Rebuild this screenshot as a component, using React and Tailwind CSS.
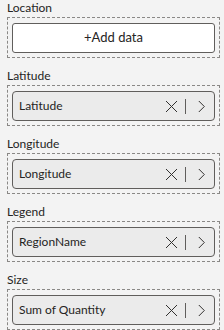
import { useState } from "react"

const wells = [
  { label: "Latitude", field: "Latitude" },
  { label: "Longitude", field: "Longitude" },
  { label: "Legend", field: "RegionName" },
  { label: "Size", field: "Sum of Quantity" },
]

const FieldPill = ({ name }) => (
  <div className="flex h-[30px] items-center rounded-[4px] border border-[#605e5c] bg-[#ebebeb] pl-[6px] pr-[9px]">
    <span className="flex-1 truncate text-[12px] text-[#252423]">{name}</span>
    <svg width="13" height="13" viewBox="0 0 13 13" className="text-[#323130]">
      <path d="M1 1 L12 12 M12 1 L1 12" stroke="currentColor" strokeWidth="1" fill="none" />
    </svg>
    <div className="ml-[7px] mr-[12px] h-[15px] w-px bg-[#605e5c]" />
    <svg width="7" height="13" viewBox="0 0 7 13" className="text-[#323130]">
      <path d="M0.8 1 L6.3 6.5 L0.8 12" stroke="currentColor" strokeWidth="1" fill="none" />
    </svg>
  </div>
)

const Well = ({ label, children }) => (
  <div>
    <div className="h-[17px] text-[12px] leading-[15px] text-[#252423]">{label}</div>
    <div className="border border-dashed border-[#8a8886] px-[4px] pt-[5px] pb-[4px]">{children}</div>
  </div>
)

export default function App() {
  const [fields] = useState(wells)

  return (
    <div
      className="flex h-[330px] w-[224px] flex-col gap-[10px] bg-[#f3f3f3] pl-[7px] pr-[4px]"
      style={{ fontFamily: 'Lato, "Noto Sans", sans-serif' }}
    >
      <Well label="Location">
        <button className="flex h-[30px] w-full items-center justify-center rounded-[3px] border border-[#605e5c] bg-white text-[13px] text-[#252423]">
          +Add data
        </button>
      </Well>
      {fields.map((w) => (
        <Well key={w.label} label={w.label}>
          <FieldPill name={w.field} />
        </Well>
      ))}
    </div>
  )
}
